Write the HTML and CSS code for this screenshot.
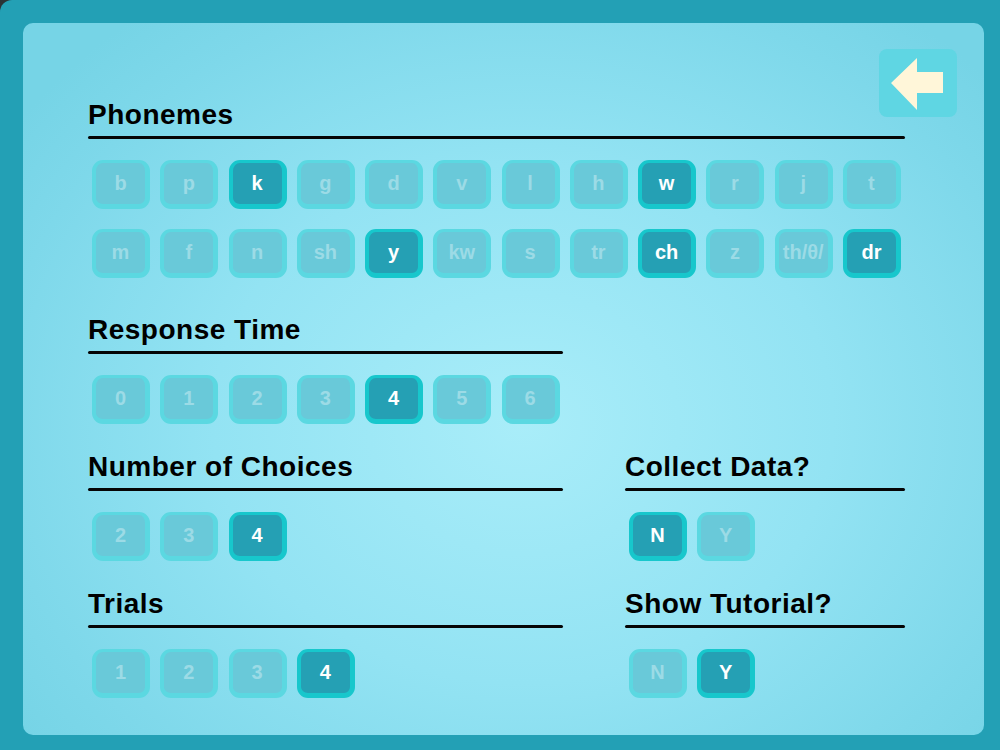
FILE: index.html
```html
<!DOCTYPE html>
<html lang="en">
<head>
<meta charset="utf-8">
<title>Settings</title>
<link rel="stylesheet" href="styles.css">
</head>
<body>
<div class="frame">
  <main class="panel">
    <button class="back" aria-label="Back">
      <svg width="78" height="68" viewBox="0 0 78 68"><polygon points="12,34 38,9 38,23 64,23 64,44 38,44 38,61" fill="#fff6d9"/></svg>
    </button>

    <section class="section phonemes">
      <h2 class="title">Phonemes</h2>
      <div class="keys keys-grid">
        <span class="key">b</span><span class="key">p</span><span class="key on">k</span><span class="key">g</span><span class="key">d</span><span class="key">v</span><span class="key">l</span><span class="key">h</span><span class="key on">w</span><span class="key">r</span><span class="key">j</span><span class="key">t</span>
        <span class="key">m</span><span class="key">f</span><span class="key">n</span><span class="key">sh</span><span class="key on">y</span><span class="key">kw</span><span class="key">s</span><span class="key">tr</span><span class="key on">ch</span><span class="key">z</span><span class="key">th/θ/</span><span class="key on">dr</span>
      </div>
    </section>

    <section class="section response">
      <h2 class="title">Response Time</h2>
      <div class="keys">
        <span class="key">0</span><span class="key">1</span><span class="key">2</span><span class="key">3</span><span class="key on">4</span><span class="key">5</span><span class="key">6</span>
      </div>
    </section>

    <div class="grid">
      <section class="section">
        <h2 class="title">Number of Choices</h2>
        <div class="keys">
          <span class="key">2</span><span class="key">3</span><span class="key on">4</span>
        </div>
      </section>
      <section class="section">
        <h2 class="title">Collect Data?</h2>
        <div class="keys">
          <span class="key on">N</span><span class="key">Y</span>
        </div>
      </section>
      <section class="section">
        <h2 class="title">Trials</h2>
        <div class="keys">
          <span class="key">1</span><span class="key">2</span><span class="key">3</span><span class="key on">4</span>
        </div>
      </section>
      <section class="section">
        <h2 class="title">Show Tutorial?</h2>
        <div class="keys">
          <span class="key">N</span><span class="key on">Y</span>
        </div>
      </section>
    </div>
  </main>
</div>
</body>
</html>
```

FILE: styles.css
```css
html {
  background: #2b3336;
}
body {
  margin: 0;
  width: 1000px;
  height: 750px;
  overflow: hidden;
  font-family: "Liberation Sans", Arial, sans-serif;
}
.frame {
  box-sizing: border-box;
  width: 1000px;
  height: 750px;
  background: #23a0b5;
  border-top-left-radius: 12px;
  padding: 23px 16px 15px 23px;
}
.panel {
  position: relative;
  box-sizing: border-box;
  width: 961px;
  height: 712px;
  border-radius: 10px;
  background: radial-gradient(ellipse 620px 520px at 500px 400px, #a9edf9 0%, #93e3f3 50%, #7ed8ea 85%, #76d4e6 100%);
  padding: 77px 79px 0 65px;
}
.back {
  position: absolute;
  top: 26px;
  right: 27px;
  width: 78px;
  height: 68px;
  padding: 0;
  border: none;
  border-radius: 8px;
  background: #5fd6e3;
}
.back svg {
  display: block;
}
.title {
  margin: 0;
  font-size: 28px;
  line-height: 30px;
  font-weight: bold;
  letter-spacing: 0.5px;
  color: #000;
}
.title::after {
  content: "";
  display: block;
  height: 3px;
  margin-top: 6px;
  border-radius: 2px;
  background: #050505;
}
.keys {
  display: grid;
  grid-auto-flow: column;
  grid-auto-columns: 58px;
  justify-content: start;
  column-gap: 10.27px;
  row-gap: 20px;
  padding: 0 4px;
  margin-top: 21px;
}
.keys-grid {
  grid-auto-flow: row;
  grid-template-columns: repeat(12, 58px);
}
.key {
  box-sizing: border-box;
  width: 58px;
  height: 49px;
  display: flex;
  align-items: center;
  justify-content: center;
  border-style: solid;
  border-width: 3px 5px 5px 4px;
  border-color: #5bd8e1;
  border-radius: 11px;
  background: #69c9d9;
  color: #9cdbe6;
  font-size: 20px;
  font-weight: bold;
}
.key.on {
  border-color: #17c7cc;
  background: #25a0b4;
  color: #ffffff;
}
.response {
  width: 475px;
  margin-top: 37px;
}
.grid {
  display: grid;
  grid-template-columns: 475px 280px;
  column-gap: 62px;
  row-gap: 28px;
  margin-top: 28px;
}
```
